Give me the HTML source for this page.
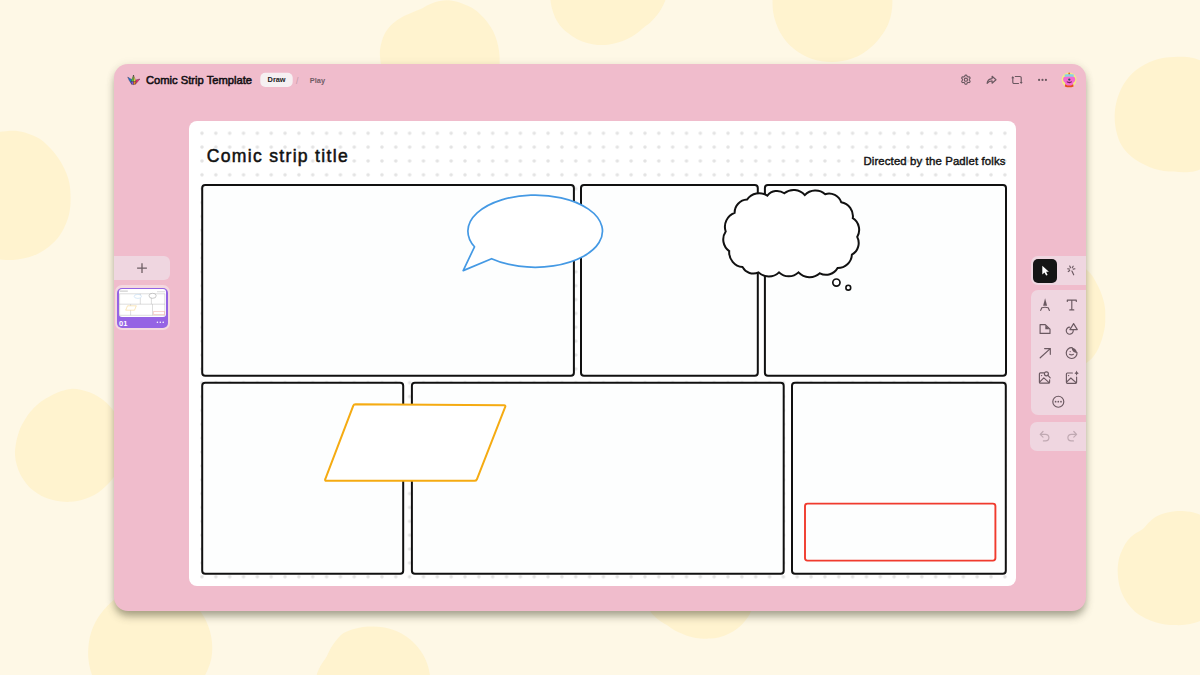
<!DOCTYPE html>
<html><head><meta charset="utf-8">
<style>
html,body{margin:0;padding:0;}
body{width:1200px;height:675px;overflow:hidden;background:#fef8e6;position:relative;font-family:"Liberation Sans",sans-serif;}
.abs{position:absolute;}
#bg{position:absolute;left:0;top:0;}
#panel{position:absolute;left:114px;top:64px;width:972px;height:547px;border-radius:14px;background:#f0bccc;overflow:hidden;box-shadow:0 6px 9px -1px rgba(60,60,40,0.45), 0 0 9px rgba(60,60,40,0.08);}
#board{position:absolute;left:75px;top:57px;width:827px;height:465px;border-radius:8px;background:#fff;}
#ov{position:absolute;left:0;top:0;}
.grp{position:absolute;background:#efd6e0;border-radius:7px;}
</style></head>
<body>
<svg id="bg" width="1200" height="675" viewBox="0 0 1200 675">
  <g fill="#fff3cf">
    <path d="M380.6 62.0 C380.3 58.5 379.6 54.9 379.9 51.4 C380.1 47.9 380.9 44.3 381.9 40.9 C383.0 37.5 384.3 34.0 386.3 31.0 C388.2 28.0 390.8 25.3 393.4 22.9 C396.1 20.6 399.2 18.6 402.2 16.9 C405.2 15.2 408.5 14.1 411.6 12.8 C414.7 11.4 417.7 10.5 420.7 9.1 C423.8 7.6 426.6 5.5 429.8 4.2 C433.0 2.8 436.5 1.5 440.0 0.9 C443.5 0.3 447.3 0.2 450.8 0.6 C454.4 1.0 458.0 2.0 461.4 3.2 C464.8 4.4 468.3 5.8 471.4 7.6 C474.5 9.4 477.5 11.7 480.1 14.2 C482.8 16.6 485.2 19.4 487.4 22.2 C489.6 25.1 491.6 28.1 493.2 31.3 C494.8 34.5 496.0 37.9 497.0 41.2 C498.0 44.6 498.6 48.1 499.1 51.6 C499.5 55.0 499.8 58.5 499.7 62.0 C499.7 65.5 499.3 68.9 498.9 72.4 C498.5 75.9 498.2 79.4 497.3 82.8 C496.3 86.2 495.1 89.7 493.4 92.8 C491.7 95.9 489.4 98.8 487.0 101.4 C484.7 104.1 482.0 106.6 479.3 108.8 C476.5 111.0 473.5 113.0 470.4 114.7 C467.3 116.4 464.0 117.8 460.7 118.9 C457.4 120.0 453.9 120.8 450.5 121.4 C447.0 121.9 443.5 122.1 440.0 122.0 C436.5 121.9 433.0 121.7 429.6 121.0 C426.2 120.4 422.8 119.5 419.5 118.3 C416.3 117.1 413.1 115.6 410.1 113.8 C407.1 112.1 404.2 110.0 401.6 107.8 C398.9 105.5 396.5 103.0 394.3 100.4 C392.0 97.7 390.0 94.8 388.3 91.8 C386.6 88.8 385.2 85.6 384.1 82.4 C382.9 79.1 382.2 75.7 381.6 72.3 C381.1 68.9 380.9 65.5 380.6 62.0 Z"/>
    <path d="M549.2 -14.0 C549.2 -17.4 549.5 -20.9 550.0 -24.2 C550.6 -27.6 551.4 -31.0 552.6 -34.2 C553.7 -37.4 555.2 -40.6 556.9 -43.5 C558.6 -46.5 560.6 -49.3 562.8 -51.9 C565.0 -54.6 567.4 -57.0 570.1 -59.2 C572.7 -61.4 575.5 -63.4 578.5 -65.1 C581.5 -66.8 584.6 -68.3 587.8 -69.5 C591.0 -70.6 594.4 -71.5 597.8 -72.1 C601.1 -72.7 604.6 -73.0 608.0 -73.0 C611.4 -73.0 614.9 -72.6 618.2 -72.0 C621.6 -71.3 624.9 -70.4 628.1 -69.2 C631.3 -68.0 634.4 -66.5 637.3 -64.7 C640.2 -63.0 643.0 -61.0 645.6 -58.8 C648.1 -56.6 650.5 -54.1 652.7 -51.5 C654.8 -48.9 656.7 -46.0 658.4 -43.1 C660.1 -40.2 661.6 -37.1 662.9 -34.0 C664.2 -30.8 665.2 -27.6 666.0 -24.2 C666.7 -20.9 667.2 -17.4 667.3 -14.0 C667.4 -10.6 667.4 -7.0 666.6 -3.7 C665.9 -0.3 664.3 2.9 662.8 5.9 C661.3 9.0 659.5 11.9 657.5 14.6 C655.5 17.2 653.2 19.7 650.8 21.9 C648.4 24.2 645.7 25.9 643.2 27.9 C640.7 29.9 638.4 32.3 635.8 34.1 C633.2 36.0 630.3 37.7 627.3 39.1 C624.4 40.5 621.2 41.7 618.0 42.6 C614.8 43.6 611.4 44.3 608.0 44.7 C604.6 45.1 601.1 45.2 597.6 44.9 C594.2 44.6 590.6 44.0 587.2 43.1 C583.8 42.1 580.5 40.8 577.3 39.2 C574.1 37.5 571.1 35.5 568.3 33.3 C565.5 31.1 562.7 28.7 560.4 25.9 C558.2 23.1 556.3 19.9 554.8 16.7 C553.4 13.5 552.3 10.0 551.5 6.6 C550.7 3.1 550.4 -0.4 550.1 -3.8 C549.7 -7.2 549.2 -10.6 549.2 -14.0 Z"/>
    <path d="M772.5 2.0 C772.5 -1.5 772.8 -4.9 773.3 -8.4 C773.8 -11.8 774.4 -15.3 775.3 -18.6 C776.3 -22.0 777.5 -25.4 779.2 -28.5 C780.9 -31.6 783.1 -34.5 785.3 -37.1 C787.6 -39.8 790.2 -42.3 793.0 -44.5 C795.7 -46.7 798.7 -48.7 801.7 -50.4 C804.8 -52.1 808.1 -53.6 811.4 -54.7 C814.7 -55.9 818.1 -56.7 821.5 -57.3 C825.0 -57.8 828.5 -58.0 832.0 -58.0 C835.5 -58.0 839.0 -57.9 842.5 -57.4 C845.9 -56.9 849.4 -56.1 852.7 -55.0 C856.1 -53.9 859.4 -52.5 862.5 -50.8 C865.6 -49.1 868.6 -47.2 871.4 -45.0 C874.2 -42.8 876.8 -40.3 879.2 -37.6 C881.6 -34.9 883.8 -32.0 885.6 -28.9 C887.3 -25.8 888.5 -22.3 889.5 -18.9 C890.6 -15.5 891.2 -12.0 891.7 -8.5 C892.2 -5.0 892.4 -1.5 892.4 2.0 C892.4 5.5 892.1 9.0 891.5 12.5 C890.9 15.9 890.0 19.4 888.7 22.7 C887.5 25.9 885.8 29.1 884.0 32.0 C882.1 35.0 880.0 37.7 877.7 40.4 C875.5 43.0 873.1 45.5 870.4 47.8 C867.8 50.0 864.9 52.1 861.9 53.9 C859.0 55.6 855.8 57.1 852.5 58.3 C849.2 59.5 845.8 60.5 842.4 61.1 C839.0 61.7 835.5 62.0 832.0 62.0 C828.5 62.0 825.0 61.8 821.6 61.2 C818.1 60.7 814.7 59.8 811.4 58.7 C808.1 57.5 804.8 56.0 801.8 54.3 C798.8 52.6 795.9 50.5 793.2 48.3 C790.5 46.0 787.9 43.5 785.7 40.8 C783.5 38.1 781.6 35.1 779.9 32.1 C778.2 29.0 776.9 25.8 775.8 22.5 C774.6 19.2 773.8 15.8 773.2 12.4 C772.7 8.9 772.5 5.5 772.5 2.0 Z"/>
    <path d="M1114.7 114.0 C1114.8 110.6 1115.3 107.1 1116.0 103.8 C1116.7 100.4 1117.7 97.1 1118.9 94.0 C1120.1 90.8 1121.6 87.7 1123.3 84.7 C1125.1 81.8 1127.1 79.0 1129.3 76.5 C1131.6 74.0 1134.1 71.7 1136.8 69.6 C1139.4 67.6 1142.3 65.8 1145.3 64.2 C1148.2 62.6 1151.3 61.3 1154.4 60.2 C1157.6 59.2 1160.8 58.3 1164.1 57.7 C1167.3 57.2 1170.7 57.1 1174.0 57.0 C1177.3 56.8 1180.7 56.6 1184.1 56.8 C1187.5 57.0 1191.0 57.4 1194.3 58.3 C1197.6 59.2 1200.9 60.5 1203.9 62.2 C1206.9 63.9 1209.7 66.1 1212.2 68.4 C1214.8 70.7 1217.2 73.3 1219.4 75.9 C1221.5 78.6 1223.4 81.5 1225.0 84.5 C1226.6 87.6 1228.0 90.7 1229.1 94.0 C1230.1 97.2 1230.9 100.5 1231.4 103.9 C1231.9 107.2 1232.0 110.6 1232.0 114.0 C1232.0 117.4 1232.1 120.8 1231.7 124.2 C1231.3 127.5 1230.6 130.9 1229.6 134.2 C1228.6 137.5 1227.3 140.8 1225.7 143.9 C1224.2 147.0 1222.3 150.0 1220.2 152.8 C1218.1 155.6 1215.7 158.2 1213.1 160.6 C1210.6 163.0 1207.8 165.5 1204.7 167.2 C1201.7 169.0 1198.2 170.4 1194.8 171.2 C1191.4 172.0 1187.7 172.1 1184.3 172.2 C1180.8 172.3 1177.4 171.7 1174.0 171.5 C1170.6 171.4 1167.3 171.5 1163.9 171.0 C1160.6 170.6 1157.3 169.8 1154.1 168.8 C1150.8 167.8 1147.7 166.4 1144.6 164.8 C1141.6 163.3 1138.5 161.7 1135.6 159.7 C1132.8 157.8 1129.9 155.5 1127.5 153.0 C1125.1 150.5 1122.8 147.6 1121.1 144.5 C1119.4 141.5 1118.2 138.0 1117.2 134.7 C1116.2 131.3 1115.6 127.8 1115.1 124.4 C1114.7 120.9 1114.6 117.4 1114.7 114.0 Z"/>
    <path d="M-59.0 195.0 C-59.0 191.2 -58.6 187.4 -57.9 183.7 C-57.2 180.0 -56.1 176.4 -54.8 172.9 C-53.5 169.4 -51.8 165.9 -49.9 162.7 C-48.0 159.5 -45.8 156.4 -43.3 153.6 C-40.9 150.8 -38.2 148.2 -35.2 145.8 C-32.3 143.5 -29.2 141.5 -25.9 139.7 C-22.7 137.9 -19.2 136.4 -15.7 135.3 C-12.2 134.1 -8.6 133.4 -5.0 132.7 C-1.4 132.0 2.3 131.5 6.0 131.2 C9.7 130.9 13.6 130.6 17.3 131.0 C21.0 131.4 24.8 132.4 28.3 133.7 C31.9 134.9 35.5 136.4 38.7 138.3 C42.0 140.3 44.9 142.8 47.6 145.4 C50.4 148.0 52.8 150.9 55.1 153.8 C57.4 156.7 59.5 159.8 61.4 163.0 C63.2 166.2 65.0 169.6 66.3 173.0 C67.7 176.5 68.8 180.2 69.5 183.8 C70.2 187.5 70.4 191.2 70.5 195.0 C70.7 198.8 70.6 202.6 70.3 206.3 C69.9 210.1 69.3 214.0 68.2 217.6 C67.1 221.3 65.6 224.9 63.8 228.4 C62.1 231.8 60.0 235.3 57.6 238.3 C55.1 241.3 52.2 244.1 49.2 246.5 C46.2 248.9 42.8 251.1 39.4 252.9 C36.0 254.7 32.4 256.2 28.7 257.3 C25.0 258.4 21.2 259.1 17.4 259.5 C13.6 260.0 9.8 260.1 6.0 260.0 C2.2 259.9 -1.6 259.5 -5.3 258.9 C-8.9 258.2 -12.6 257.1 -16.1 255.8 C-19.6 254.5 -23.1 252.8 -26.3 250.9 C-29.5 249.0 -32.6 246.8 -35.4 244.4 C-38.3 241.9 -40.9 239.3 -43.3 236.4 C-45.8 233.6 -48.0 230.5 -49.9 227.3 C-51.8 224.1 -53.5 220.6 -54.8 217.1 C-56.1 213.6 -57.2 210.0 -57.9 206.3 C-58.6 202.6 -59.0 198.8 -59.0 195.0 Z"/>
    <path d="M15.7 445.0 C16.1 441.8 16.9 438.7 17.8 435.6 C18.7 432.6 19.6 429.6 20.9 426.8 C22.2 424.0 23.8 421.3 25.5 418.7 C27.1 416.1 28.8 413.6 30.8 411.3 C32.7 408.9 34.9 406.7 37.2 404.7 C39.5 402.7 42.0 400.9 44.6 399.3 C47.2 397.6 49.9 396.0 52.7 394.7 C55.5 393.3 58.4 392.0 61.5 391.0 C64.5 390.1 67.8 389.2 71.0 388.9 C74.2 388.7 77.6 389.1 80.7 389.7 C83.9 390.3 87.1 391.3 90.1 392.5 C93.1 393.7 96.1 395.2 98.8 396.9 C101.5 398.6 104.1 400.6 106.5 402.7 C108.8 404.9 111.0 407.3 112.9 409.8 C114.9 412.3 116.6 415.0 118.0 417.8 C119.5 420.6 120.7 423.6 121.6 426.6 C122.6 429.6 123.2 432.6 123.6 435.7 C124.1 438.8 124.3 441.9 124.3 445.0 C124.3 448.1 124.0 451.2 123.5 454.3 C123.0 457.3 122.2 460.4 121.2 463.3 C120.2 466.2 118.8 469.0 117.3 471.7 C115.8 474.4 114.0 477.0 112.0 479.4 C110.1 481.9 108.0 484.2 105.7 486.3 C103.4 488.5 101.0 490.6 98.4 492.4 C95.7 494.2 92.9 495.8 90.0 497.1 C87.0 498.5 83.9 499.5 80.8 500.3 C77.6 501.1 74.3 501.6 71.0 501.8 C67.7 502.0 64.3 501.9 61.0 501.6 C57.7 501.2 54.4 500.5 51.1 499.6 C47.9 498.6 44.7 497.4 41.6 495.9 C38.6 494.3 35.6 492.5 33.0 490.3 C30.3 488.2 28.0 485.5 25.9 482.9 C23.8 480.2 21.8 477.3 20.2 474.3 C18.7 471.3 17.5 468.0 16.7 464.8 C15.8 461.5 15.2 458.2 15.0 454.9 C14.8 451.6 15.2 448.2 15.7 445.0 Z"/>
    <path d="M1002.0 317.0 C1002.0 314.0 1002.5 311.0 1003.2 308.0 C1003.8 305.1 1004.7 302.2 1005.8 299.5 C1007.0 296.7 1008.3 294.0 1009.9 291.6 C1011.5 289.1 1013.3 286.7 1015.3 284.5 C1017.2 282.3 1019.4 280.3 1021.6 278.4 C1023.9 276.5 1026.1 274.6 1028.6 273.0 C1031.1 271.4 1033.8 270.0 1036.5 268.9 C1039.2 267.8 1042.1 266.8 1045.0 266.2 C1048.0 265.5 1050.9 265.4 1054.0 265.0 C1057.1 264.6 1060.2 263.9 1063.4 263.9 C1066.6 263.8 1069.9 263.9 1073.1 264.4 C1076.4 264.9 1080.1 265.3 1083.0 266.9 C1085.8 268.4 1088.4 271.0 1090.5 273.5 C1092.7 276.0 1094.3 279.0 1095.9 281.9 C1097.5 284.7 1098.9 287.5 1100.1 290.4 C1101.3 293.3 1102.3 296.2 1103.1 299.1 C1104.0 302.1 1104.7 305.0 1105.0 308.0 C1105.4 311.0 1105.3 314.0 1105.3 317.0 C1105.3 320.0 1105.3 323.0 1105.0 326.0 C1104.6 329.0 1103.8 331.9 1103.1 334.9 C1102.3 337.8 1101.5 340.8 1100.3 343.8 C1099.2 346.7 1097.9 349.7 1096.2 352.4 C1094.5 355.1 1092.5 357.8 1090.1 360.1 C1087.8 362.3 1085.0 364.3 1082.1 365.7 C1079.2 367.1 1075.9 367.9 1072.8 368.5 C1069.6 369.2 1066.4 369.5 1063.3 369.6 C1060.2 369.7 1057.0 369.3 1054.0 369.0 C1051.0 368.7 1047.9 368.6 1045.0 368.0 C1042.1 367.4 1039.2 366.5 1036.4 365.4 C1033.6 364.3 1030.9 363.0 1028.4 361.4 C1025.8 359.9 1023.5 358.0 1021.2 356.1 C1018.9 354.2 1016.8 352.1 1014.8 349.9 C1012.9 347.7 1011.1 345.2 1009.5 342.7 C1008.0 340.1 1006.6 337.4 1005.5 334.6 C1004.4 331.9 1003.6 328.9 1003.0 326.0 C1002.4 323.1 1002.0 320.0 1002.0 317.0 Z"/>
    <path d="M1117.7 568.0 C1117.9 564.7 1118.3 561.3 1119.1 558.1 C1119.9 555.0 1121.2 551.9 1122.6 548.9 C1124.0 546.0 1125.6 543.1 1127.6 540.6 C1129.6 538.2 1132.1 536.0 1134.6 534.1 C1137.0 532.2 1140.1 531.2 1142.5 529.3 C1144.9 527.4 1146.5 524.7 1148.8 522.6 C1151.1 520.5 1153.5 518.2 1156.3 516.6 C1159.0 515.0 1162.2 513.9 1165.3 513.0 C1168.4 512.1 1171.7 511.6 1175.0 511.3 C1178.3 511.0 1181.7 511.0 1185.0 511.3 C1188.3 511.5 1191.8 511.9 1195.1 512.9 C1198.3 513.9 1201.5 515.4 1204.3 517.3 C1207.1 519.1 1209.6 521.6 1211.9 524.0 C1214.2 526.5 1216.1 529.2 1218.1 531.9 C1220.0 534.5 1221.9 537.2 1223.5 540.0 C1225.1 542.8 1226.7 545.7 1227.9 548.7 C1229.1 551.8 1230.1 555.0 1230.8 558.2 C1231.5 561.4 1231.9 564.7 1232.0 568.0 C1232.1 571.3 1231.9 574.7 1231.4 577.9 C1231.0 581.2 1230.2 584.5 1229.1 587.7 C1228.1 590.9 1226.8 594.0 1225.2 597.0 C1223.6 599.9 1221.7 602.8 1219.6 605.5 C1217.5 608.1 1215.1 610.5 1212.6 612.8 C1210.0 615.0 1207.2 617.1 1204.3 618.8 C1201.4 620.4 1198.2 621.8 1195.0 622.8 C1191.7 623.8 1188.3 624.5 1185.0 624.8 C1181.7 625.2 1178.3 625.2 1175.0 625.1 C1171.7 625.0 1168.3 624.9 1165.1 624.4 C1161.8 623.9 1158.5 623.1 1155.3 622.2 C1152.1 621.2 1148.9 620.0 1145.8 618.5 C1142.8 617.1 1139.7 615.4 1137.0 613.3 C1134.3 611.2 1131.9 608.6 1129.7 606.0 C1127.5 603.4 1125.5 600.5 1123.9 597.5 C1122.2 594.5 1120.9 591.3 1120.0 588.0 C1119.0 584.8 1118.4 581.4 1118.1 578.0 C1117.7 574.7 1117.6 571.3 1117.7 568.0 Z"/>
    <path d="M88.3 648.0 C88.6 644.4 89.0 640.8 89.8 637.3 C90.6 633.8 91.8 630.4 93.1 627.1 C94.5 623.8 96.1 620.6 97.9 617.7 C99.8 614.7 102.0 611.9 104.3 609.2 C106.6 606.6 109.0 604.0 111.6 601.7 C114.3 599.4 117.1 597.2 120.1 595.3 C123.1 593.4 126.3 591.8 129.6 590.5 C132.8 589.1 136.3 588.0 139.8 587.3 C143.3 586.6 146.9 586.1 150.5 586.0 C154.1 585.9 157.7 586.3 161.3 587.0 C164.8 587.6 168.3 588.6 171.7 589.8 C175.1 591.0 178.4 592.6 181.5 594.4 C184.6 596.2 187.5 598.3 190.3 600.6 C193.0 602.9 195.6 605.5 197.9 608.2 C200.2 611.0 202.3 614.0 204.0 617.1 C205.8 620.2 207.3 623.5 208.6 626.9 C209.8 630.2 210.7 633.8 211.3 637.3 C211.9 640.8 212.3 644.4 212.3 648.0 C212.3 651.6 212.0 655.2 211.3 658.7 C210.6 662.2 209.3 665.6 208.0 668.9 C206.6 672.2 205.0 675.4 203.2 678.4 C201.4 681.5 199.5 684.5 197.3 687.3 C195.1 690.0 192.6 692.6 189.9 694.9 C187.2 697.3 184.3 699.4 181.2 701.2 C178.2 703.0 174.9 704.6 171.6 705.9 C168.2 707.2 164.7 708.2 161.2 708.9 C157.7 709.6 154.1 709.8 150.5 710.0 C146.9 710.1 143.2 710.2 139.6 709.8 C136.0 709.4 132.3 708.6 128.8 707.6 C125.3 706.6 121.7 705.2 118.4 703.6 C115.1 701.9 111.8 700.0 108.8 697.7 C105.7 695.5 102.6 693.1 100.2 690.2 C97.8 687.3 96.0 683.8 94.4 680.4 C92.7 677.0 91.4 673.4 90.4 669.9 C89.4 666.3 88.7 662.6 88.4 658.9 C88.0 655.3 88.1 651.6 88.3 648.0 Z"/>
    <path d="M316.2 684.0 C316.1 680.7 316.2 677.3 317.0 674.1 C317.8 671.0 319.4 667.9 321.0 665.1 C322.6 662.2 324.8 659.9 326.4 657.1 C328.0 654.3 328.9 651.2 330.6 648.4 C332.2 645.6 334.1 642.8 336.3 640.3 C338.5 637.7 340.8 635.0 343.6 633.1 C346.4 631.3 349.8 630.2 353.0 629.2 C356.3 628.1 359.6 627.4 362.9 626.9 C366.3 626.5 369.7 626.4 373.0 626.4 C376.3 626.5 379.7 626.8 383.0 627.3 C386.3 627.9 389.6 628.6 392.8 629.7 C395.9 630.8 399.1 632.2 402.0 633.8 C404.9 635.4 407.7 637.4 410.3 639.5 C412.9 641.7 415.3 644.1 417.5 646.7 C419.6 649.3 421.6 652.0 423.3 655.0 C424.9 657.9 426.3 661.0 427.4 664.2 C428.5 667.4 429.2 670.7 429.8 674.0 C430.4 677.3 430.9 680.6 431.0 684.0 C431.1 687.4 430.9 690.8 430.4 694.1 C430.0 697.5 429.2 700.8 428.1 704.1 C427.0 707.3 425.7 710.5 424.1 713.5 C422.4 716.5 420.5 719.4 418.3 722.0 C416.0 724.6 413.4 726.9 410.7 728.9 C408.0 731.0 405.1 732.9 402.1 734.5 C399.1 736.0 396.0 737.3 392.8 738.4 C389.6 739.4 386.3 740.1 383.0 740.5 C379.7 741.0 376.3 741.1 373.0 741.0 C369.7 740.9 366.4 740.6 363.1 740.0 C359.9 739.3 356.7 738.4 353.6 737.2 C350.6 736.0 347.6 734.6 344.8 732.9 C342.0 731.2 339.3 729.2 336.8 727.1 C334.4 725.0 332.1 722.5 330.0 720.0 C327.9 717.6 326.0 714.9 324.3 712.1 C322.6 709.3 321.1 706.4 319.9 703.3 C318.8 700.3 317.8 697.1 317.2 693.8 C316.6 690.6 316.2 687.3 316.2 684.0 Z"/>
    <path d="M647.0 585.0 C647.1 581.8 646.8 578.7 647.1 575.6 C647.4 572.4 647.9 569.3 648.8 566.2 C649.6 563.1 650.8 560.0 652.2 557.1 C653.6 554.2 655.2 551.2 657.2 548.6 C659.2 546.1 661.6 543.7 664.2 541.8 C666.8 539.8 669.8 538.2 672.7 536.9 C675.6 535.5 678.7 534.4 681.8 533.6 C684.9 532.8 688.0 532.3 691.2 532.0 C694.3 531.7 697.4 531.9 700.5 532.0 C703.6 532.0 706.7 531.8 709.8 532.1 C712.9 532.4 716.1 533.0 719.1 533.8 C722.2 534.7 725.2 535.8 728.1 537.2 C731.0 538.6 733.9 540.2 736.4 542.2 C739.0 544.2 741.3 546.5 743.3 549.1 C745.3 551.6 747.0 554.5 748.4 557.4 C749.8 560.2 751.0 563.2 751.9 566.3 C752.8 569.3 753.4 572.5 753.8 575.6 C754.1 578.7 753.9 581.8 754.0 585.0 C754.1 588.2 754.6 591.3 754.5 594.5 C754.4 597.7 754.1 601.1 753.3 604.2 C752.6 607.4 751.5 610.7 750.0 613.6 C748.6 616.5 746.5 619.3 744.4 621.8 C742.2 624.3 739.7 626.7 737.1 628.7 C734.5 630.7 731.6 632.4 728.7 633.8 C725.8 635.3 722.6 636.4 719.5 637.2 C716.4 638.0 713.1 638.4 710.0 638.6 C706.8 638.8 703.6 638.7 700.5 638.4 C697.4 638.1 694.3 637.7 691.3 636.9 C688.4 636.2 685.5 635.0 682.7 633.9 C679.9 632.8 677.1 631.6 674.4 630.2 C671.8 628.7 669.5 626.8 666.9 625.1 C664.3 623.3 661.5 621.9 658.9 619.9 C656.4 617.9 653.5 615.8 651.6 613.2 C649.8 610.6 648.6 607.3 647.8 604.2 C646.9 601.1 646.7 597.7 646.5 594.5 C646.4 591.3 646.9 588.2 647.0 585.0 Z"/>
  </g>
</svg>

<div id="panel">
  <div id="board"></div>
  <!-- left sidebar -->
  <div class="grp" style="left:-8px;top:192.3px;width:63.8px;height:23.7px;border-radius:6px;"></div>
  <div class="abs" style="left:1px;top:221.3px;width:54.6px;height:44.8px;border-radius:7px;background:#f4d8df;"></div>
  <div class="abs" style="left:3px;top:223.7px;width:50.5px;height:40.4px;border-radius:5px;background:#9563e4;"></div>
  <div class="abs" style="left:4.5px;top:225px;width:47px;height:27.7px;border-radius:3px;background:#fff;"></div>
  <!-- right toolbar -->
  <div class="grp" style="left:917px;top:192px;width:70px;height:29px;"></div>
  <div class="abs" style="left:919px;top:194.5px;width:24px;height:24px;border-radius:5px;background:#151515;"></div>
  <div class="grp" style="left:916.8px;top:226.4px;width:70px;height:125px;"></div>
  <div class="grp" style="left:916.2px;top:357.5px;width:70px;height:29px;"></div>
</div>

<svg id="ov" width="1200" height="675" viewBox="0 0 1200 675">
  <defs>
    <pattern id="dots" patternUnits="userSpaceOnUse" x="195.08" y="126.32" width="13.843" height="13.86">
      <circle cx="6.92" cy="6.93" r="1.75" fill="#e3e3e3"/>
    </pattern>
  </defs>

  <!-- header logo -->
  <g stroke="#2a2230" stroke-width="0.35" stroke-linejoin="round">
    <path d="M127.7 77.1 L131.5 79.4 L131.7 84.3 L129.3 80.6 Z" fill="#1f73d6"/>
    <path d="M139.9 79 L135.7 80 L135.4 84.3 L137.8 81.6 Z" fill="#ea2a73"/>
    <path d="M133.5 75 L131 81.6 L133.5 81.6 Z" fill="#3fd43a"/>
    <path d="M133.5 75 L136 81.6 L133.5 81.6 Z" fill="#e2dc3c"/>
    <path d="M131 81.6 L133.5 81.6 L133.5 84.6 L131.6 84.2 Z" fill="#8552e4"/>
    <path d="M133.5 81.6 L136 81.6 L135.4 84.2 L133.5 84.6 Z" fill="#f28423"/>
  </g>
  <text x="146" y="83.9" font-family="Liberation Sans" font-size="11.4" textLength="106" lengthAdjust="spacingAndGlyphs" fill="#141014" stroke="#141014" stroke-width="0.55">Comic Strip Template</text>
  <rect x="260.3" y="72.7" width="32.4" height="14.3" rx="5" fill="#f6f0f2"/>
  <text x="267.6" y="82.4" font-family="Liberation Sans" font-weight="bold" font-size="7.6" textLength="18" lengthAdjust="spacingAndGlyphs" fill="#222">Draw</text>
  <text x="296" y="83.8" font-family="Liberation Sans" font-size="8.6" fill="#c49aa9">/</text>
  <text x="309.8" y="82.5" font-family="Liberation Sans" font-weight="bold" font-size="7.9" textLength="15.2" lengthAdjust="spacingAndGlyphs" fill="#6f5b65">Play</text>

  <!-- header icons -->
  <g fill="none" stroke="#6a5860" stroke-width="1.15" stroke-linecap="round" stroke-linejoin="round">
    <path d="M965.90 75.10 L966.20 75.14 L966.49 75.25 L966.75 75.45 L966.94 75.84 L967.08 76.23 L967.24 76.45 L967.42 76.63 L967.60 76.76 L967.80 76.85 L968.04 76.91 L968.32 76.95 L968.73 76.87 L969.16 76.84 L969.46 76.97 L969.70 77.16 L969.88 77.40 L970.00 77.68 L970.05 77.98 L970.01 78.31 L969.76 78.66 L969.49 78.99 L969.38 79.24 L969.32 79.48 L969.30 79.70 L969.32 79.92 L969.38 80.16 L969.49 80.41 L969.76 80.74 L970.01 81.09 L970.05 81.42 L970.00 81.72 L969.88 82.00 L969.70 82.24 L969.46 82.43 L969.16 82.56 L968.73 82.53 L968.32 82.45 L968.04 82.49 L967.80 82.55 L967.60 82.64 L967.42 82.77 L967.24 82.95 L967.08 83.17 L966.94 83.56 L966.75 83.95 L966.49 84.15 L966.20 84.26 L965.90 84.30 L965.60 84.26 L965.31 84.15 L965.05 83.95 L964.86 83.56 L964.72 83.17 L964.56 82.95 L964.38 82.77 L964.20 82.64 L964.00 82.55 L963.76 82.49 L963.48 82.45 L963.07 82.53 L962.64 82.56 L962.34 82.43 L962.10 82.24 L961.92 82.00 L961.80 81.72 L961.75 81.42 L961.79 81.09 L962.04 80.74 L962.31 80.41 L962.42 80.16 L962.48 79.92 L962.50 79.70 L962.48 79.48 L962.42 79.24 L962.31 78.99 L962.04 78.66 L961.79 78.31 L961.75 77.98 L961.80 77.68 L961.92 77.40 L962.10 77.16 L962.34 76.97 L962.64 76.84 L963.07 76.87 L963.48 76.95 L963.76 76.91 L964.00 76.85 L964.20 76.76 L964.38 76.63 L964.56 76.45 L964.72 76.23 L964.86 75.84 L965.05 75.45 L965.31 75.25 L965.60 75.14 Z"/>
    <circle cx="965.9" cy="79.7" r="1.6"/>
    <path d="M987.1 83.4 C987.4 80.6 989.3 78.9 992.1 78.6 L992.1 76.3 L996 79.8 L992.1 83.2 L992.1 80.9 C990 80.9 988.4 81.8 987.1 83.4 Z"/>
    <path d="M1012.8 77.6 v4.6 a1.3 1.3 0 0 0 1.3 1.3 h4.4"/>
    <path d="M1015.3 76.5 h4.6 a1.3 1.3 0 0 1 1.3 1.3 v4.6"/>
  </g>
  <g fill="#6a5860">
    <path d="M1011.3 78.2 L1012.8 76 L1014.3 78.2 Z"/>
    <path d="M1019.7 81.9 L1021.2 84.1 L1022.7 81.9 Z"/>
    <circle cx="1039.1" cy="79.9" r="1.1"/>
    <circle cx="1042.5" cy="79.9" r="1.1"/>
    <circle cx="1045.9" cy="79.9" r="1.1"/>
  </g>
  <!-- avatar -->
  <circle cx="1069.1" cy="79.8" r="7.4" fill="#f3ec86"/>
  <path d="M1065.2 84.2 L1073.2 84.2 L1073.6 86.4 Q1069.2 88.2 1064.8 86.4 Z" fill="#e4501c"/>
  <path d="M1065.6 76.2 C1064.2 76.6 1063 77.4 1063.1 79.6 C1063.2 81.2 1064 82.2 1064.9 82.4 C1065.3 84.6 1066.8 85.6 1069.2 85.6 C1071.6 85.6 1073.1 84.6 1073.5 82.4 C1074.4 82.2 1075.2 81.2 1075.3 79.6 C1075.4 77.4 1074.2 76.6 1072.8 76.2 Z" fill="#f46ad2"/>
  <path d="M1064.6 74.6 Q1069.2 73.4 1073.8 74.6 L1073.6 76.8 Q1069.2 76 1064.8 76.8 Z" fill="#86cfe8"/>
  <circle cx="1069.2" cy="73.4" r="0.9" fill="#d66a2a"/>
  <circle cx="1069.3" cy="79.6" r="1.15" fill="#1d5a50"/>
  <path d="M1066.8 81.8 Q1069.3 84 1071.8 81.8 Q1069.3 82.8 1066.8 81.8 Z" fill="#5a1a40" stroke="#5a1a40" stroke-width="0.5"/>

  <!-- board -->
  <rect x="195" y="126" width="815" height="456" fill="url(#dots)"/>
  <g fill="#fdfefe" stroke="#111" stroke-width="2">
    <rect x="202.2" y="185" width="371.7" height="190.8" rx="3"/>
    <rect x="581" y="185" width="176.8" height="190.8" rx="3"/>
    <rect x="764.9" y="185" width="241.1" height="190.8" rx="3"/>
    <rect x="202.2" y="382.8" width="201" height="191" rx="3"/>
    <rect x="411.9" y="382.8" width="371.8" height="191" rx="3"/>
    <rect x="792" y="382.8" width="213.8" height="191" rx="3"/>
  </g>
  <text x="206.7" y="161.6" font-family="Liberation Sans" font-size="17.6" textLength="141" lengthAdjust="spacing" fill="#111" stroke="#111" stroke-width="0.5">Comic strip title</text>
  <text x="863.4" y="165.3" font-family="Liberation Sans" font-size="11.4" textLength="142" lengthAdjust="spacing" fill="#111" stroke="#111" stroke-width="0.4">Directed by the Padlet folks</text>

  <!-- speech bubble -->
  <path d="M474.5 246.8 L463.2 270.6 L491.6 258.7 A67.3 36.1 0 1 0 474.5 246.8 Z" fill="#fff" stroke="#4499e4" stroke-width="1.7" stroke-linejoin="round"/>
  <!-- thought cloud -->
  <path d="M747.0 199.6 A15.0 15.0 0 0 1 767.4 195.6 A12.3 12.3 0 0 1 784.3 193.3 A14.8 14.8 0 0 1 804.8 195.1 A14.7 14.7 0 0 1 825.2 194.2 A12.9 12.9 0 0 1 841.2 202.2 A14.2 14.2 0 0 1 852.8 218.2 A13.8 13.8 0 0 1 857.2 236.9 A13.4 13.4 0 0 1 851.9 254.7 A14.1 14.1 0 0 1 837.6 268.0 A13.3 13.3 0 0 1 819.9 273.3 A15.4 15.4 0 0 1 798.5 272.4 A14.0 14.0 0 0 1 779.0 272.4 A14.8 14.8 0 0 1 758.5 272.4 A12.1 12.1 0 0 1 742.6 267.1 A15.0 15.0 0 0 1 729.2 251.1 A14.3 14.3 0 0 1 725.7 231.5 A14.8 14.8 0 0 1 734.6 212.9 A13.1 13.1 0 0 1 747.0 199.6 Z" fill="#fff" stroke="#111" stroke-width="2"/>
  <circle cx="836.4" cy="282.6" r="3.6" fill="#fff" stroke="#111" stroke-width="1.7"/>
  <circle cx="848.3" cy="287.7" r="2.4" fill="#fff" stroke="#111" stroke-width="1.6"/>
  <!-- parallelogram -->
  <path d="M355.5 404.2 L504 405.3 Q506 405.4 505.2 407 L476.8 479.5 Q476.2 480.8 474.5 480.8 L326.5 480.8 Q324.5 480.8 325.3 479 L353.2 405.8 Q353.8 404.2 355.5 404.2 Z" fill="#fff" stroke="#f5ab12" stroke-width="2"/>
  <!-- red rect -->
  <rect x="805" y="503.6" width="190.4" height="57" rx="2.5" fill="none" stroke="#f03b2e" stroke-width="1.9"/>

  <!-- sidebar -->
  <path d="M142 263.3 v9.8 M137.1 268.2 h9.8" stroke="#6e5e64" stroke-width="1.3"/>
  <text x="119" y="325.6" font-family="Liberation Sans" font-weight="bold" font-size="7.5" fill="#fff">01</text>
  <g fill="#fff"><circle cx="157.4" cy="322.3" r="0.8"/><circle cx="160.3" cy="322.3" r="0.8"/><circle cx="163.2" cy="322.3" r="0.8"/></g>

  <!-- toolbar icons -->
  <path d="M1042.3 265.8 L1042.3 274.4 L1044.5 272.4 L1046.1 275.6 L1047.6 274.9 L1046.1 271.8 L1048.9 271.8 Z" fill="#fff"/>
  <g fill="none" stroke="#6a5860" stroke-width="1.15" stroke-linecap="round" stroke-linejoin="round">
    <path d="M1071.9 271 L1073.7 274.8"/>
    <path d="M1070.50 267.68 L1069.74 266.05 M1072.25 267.75 L1073.15 266.20 M1073.17 269.07 L1074.94 268.76 M1069.43 269.07 L1067.66 268.76 M1069.74 270.49 L1068.27 271.52"/>
    <path d="M1040.7 310.4 L1041.8 307.7 Q1045 306.8 1048.2 307.7 L1049.4 310.4"/>
    <path d="M1067.3 301.4 v-1.3 h9 v1.3 M1071.8 300.1 v9.8 M1069.8 309.9 h4"/>
    <path d="M1040.1 324.6 h5.2 l4.7 4.6 v4.2 h-9.9 Z"/>
    <path d="M1073.2 330.2 A3.5 3.5 0 1 1 1069.8 327.2"/>
    <path d="M1073.6 323.6 L1077.3 329.6 L1069.9 329.6 Z"/>
    <path d="M1040.2 357.8 L1050.3 348.6 M1044.6 348.6 h5.7 v5.7"/>
    <path d="M1077 352.5 A5.4 5.4 0 1 1 1072.2 347.7 M1072.2 347.7 C1072.5 350.8 1074 352.2 1077 352.5"/>
    <path d="M1069.6 354.3 Q1071.5 355.6 1073.4 354.3"/>
    <path d="M1043.6 372.8 h-3.2 a1 1 0 0 0 -1 1 v8.4 a1 1 0 0 0 1 1 h8.2 a1 1 0 0 0 1 -1 v-2.4 M1039.8 381.8 L1043.8 377.8 L1048.8 382.4"/>
    <circle cx="1046.4" cy="373.8" r="2"/>
    <path d="M1047.9 375.4 L1050.2 377.8"/>
    <path d="M1072.4 373 h-5 a1 1 0 0 0 -1 1 v8.3 a1 1 0 0 0 1 1 h8.2 a1 1 0 0 0 1 -1 v-5.2 M1066.8 381.8 L1070.8 378 L1075.8 382.4"/>
    <circle cx="1058.3" cy="401.7" r="5.5"/>
  </g>
  <g fill="#6a5860">
    <path d="M1045.1 298.2 L1043.1 305.8 L1047.1 305.8 Z"/>
    <circle cx="1041.6" cy="375.6" r="0.7"/>
    <circle cx="1068.6" cy="375.6" r="0.7"/>
    <path d="M1045.3 325 L1049.6 329.3 L1045.3 329.3 Z"/>
    <path d="M1076.6 370.6 Q1076.9 372.8 1078.8 373.2 Q1076.9 373.6 1076.6 375.8 Q1076.3 373.6 1074.4 373.2 Q1076.3 372.8 1076.6 370.6 Z"/>
    <circle cx="1070.2" cy="351.6" r="0.6"/>
    <path d="M1072.2 347.7 C1072.5 350.8 1074 352.2 1077 352.5 C1076.5 349.8 1074.8 348.1 1072.2 347.7 Z"/>
    <circle cx="1055.6" cy="401.7" r="0.85"/><circle cx="1058.3" cy="401.7" r="0.85"/><circle cx="1061" cy="401.7" r="0.85"/>
  </g>
  <g fill="none" stroke="#c0a9b2" stroke-width="1.2" stroke-linecap="round" stroke-linejoin="round">
    <path d="M1043 431.5 L1040.2 434.3 L1043 437.1 M1040.4 434.3 h5.2 a3.3 3.3 0 0 1 0 6.6 h-2.2"/>
    <path d="M1073.8 431.5 L1076.6 434.3 L1073.8 437.1 M1076.4 434.3 h-5.2 a3.3 3.3 0 0 0 0 6.6 h2.2"/>
  </g>
  <!-- thumbnail contents -->
  <g fill="none" stroke="#a8a8a8" stroke-width="0.4">
    <path d="M119.4 293.8 H165 M119.4 304.2 H165 M119.4 315.3 H165 M119.6 293.8 V315.3 M164.8 293.8 V315.3 M140.3 293.8 V304.2 M151.4 293.8 V304.2 M130.6 304.2 V315.3 M152.5 304.2 V315.3"/>
  </g>
  <rect x="119.8" y="290.6" width="8" height="1" fill="#c4c4c4"/>
  <rect x="157" y="291.4" width="8" height="0.8" fill="#d4d4d4"/>
  <ellipse cx="137.8" cy="296.4" rx="3.6" ry="2" fill="#fff" stroke="#a9cdef" stroke-width="0.45"/>
  <ellipse cx="152.6" cy="295.8" rx="3.6" ry="2.5" fill="#fff" stroke="#8a8a8a" stroke-width="0.45"/>
  <path d="M127.5 305.8 L136.3 305.8 L134.5 310.2 L125.7 310.2 Z" fill="#fff" stroke="#f3c96e" stroke-width="0.45"/>
  <rect x="153.8" y="311.6" width="10.8" height="3.2" fill="none" stroke="#f2a198" stroke-width="0.45"/>
</svg>
</body></html>
